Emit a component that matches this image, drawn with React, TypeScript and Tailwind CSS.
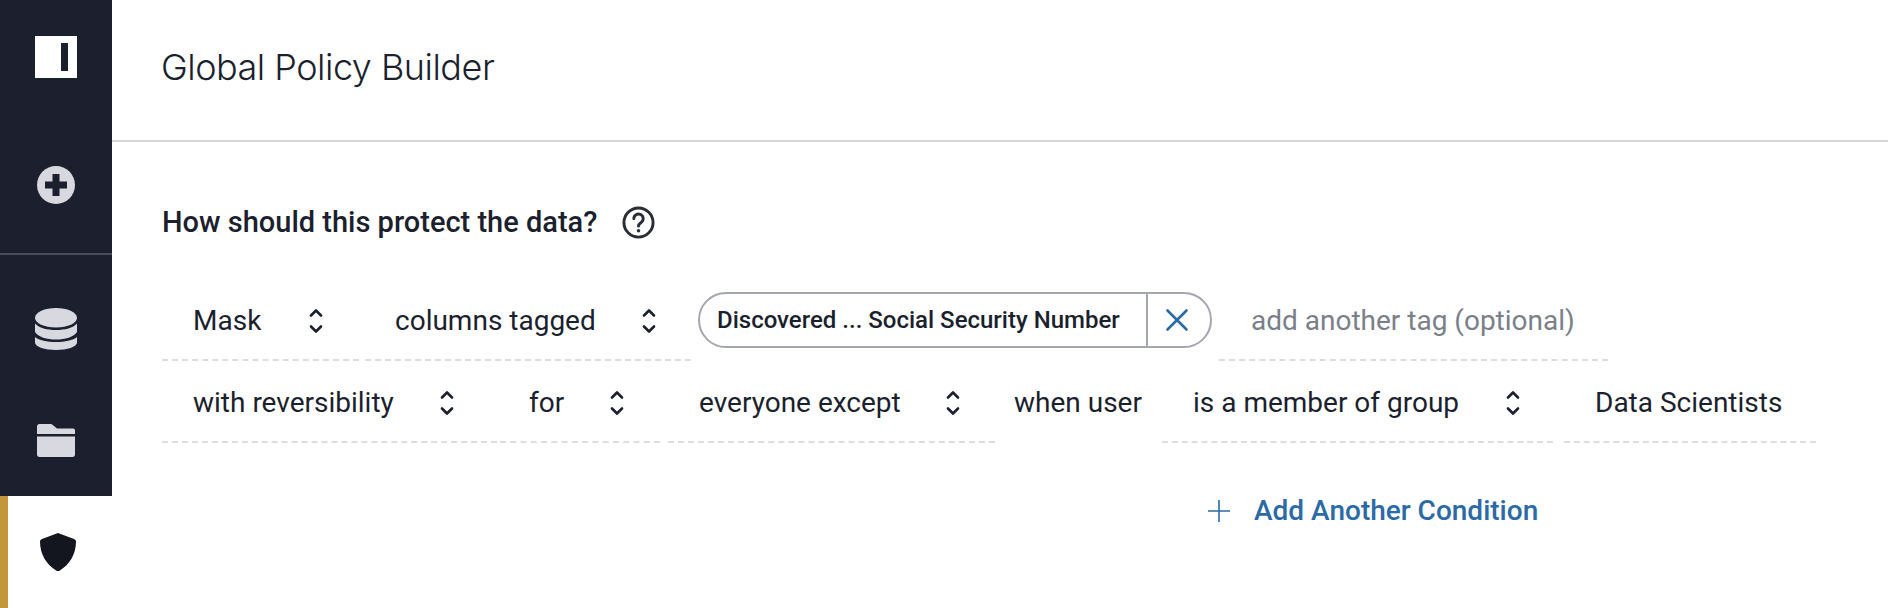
import * as React from "react"

function UpDown() {
  return (
    <svg viewBox="0 0 14 28" className="w-[14px] h-[28px] shrink-0" fill="none" stroke="#1b1f2e" strokeWidth="2.6" strokeLinecap="round" strokeLinejoin="round">
      <path d="M2 8.500 7 3.500l5 5" />
      <path d="M2 19.500 7 24.500l5-5" />
    </svg>
  )
}

interface FieldProps {
  label: string
  width: string
  gap?: string
  pad?: string
  chevron?: boolean
  muted?: boolean
}

function Field({ label, width, gap, pad = "pl-[31px]", chevron = true, muted }: FieldProps) {
  return (
    <div className={`flex items-center h-[78px] border-b-2 border-dashed border-[#dcdde0] shrink-0 ${pad} ${width}`}>
      <span className={`whitespace-nowrap ${muted ? "text-[#7b7f8a]" : "text-[#1b1f2e]"}`}>{label}</span>
      {chevron && <span className={gap}><UpDown /></span>}
    </div>
  )
}

export default function App() {
  return (
    <div className="flex h-[608px] w-[1888px] overflow-hidden bg-white font-['Roboto',sans-serif] text-[#1b1f2e]">
      <aside className="flex flex-col w-[112px] shrink-0 bg-[#1b1f2e]">
        <div className="flex flex-col items-center border-b-2 border-[#4a4d5a] h-[255px]">
          <div className="flex items-center justify-center w-[42px] h-[42px] mt-[36px] bg-white pl-[17px]">
            <div className="w-[7px] h-[28px] bg-[#1b1f2e]" />
          </div>
          <svg viewBox="0 0 38 38" className="w-[38px] h-[38px] mt-[88px]">
            <circle cx="19" cy="19" r="19" fill="#d8d9e0" />
            <path d="M15.500 8h7v7.500H30v7h-7.500V30h-7v-7.500H8v-7h7.500z" fill="#1b1f2e" />
          </svg>
        </div>
        <div className="flex flex-col items-center flex-1">
          <svg viewBox="0 0 42 42" className="w-[42px] h-[42px] mt-[53px]" fill="#d8d9e0">
            <path d="M0 10C0 4 10 0 21 0s21 4 21 10c0 5-9 9.500-21 9.500S0 15 0 10z" />
            <path d="M0 15.500C4 20 12 22 21 22s17-2 21-6.500V24c-3 5-12 7.500-21 7.500S3 29 0 24z" />
            <path d="M0 29c4 3.500 12 5 21 5s17-1.500 21-5v5.500C42 39 32 42 21 42S0 39 0 34.500z" />
          </svg>
          <svg viewBox="0 0 38 33" className="w-[38px] h-[33px] mt-[74px]" fill="#d8d9e0">
            <path d="M0 10V2.500C0 1 1 0 2.500 0h11c1 0 1.700.4 2.300 1L20 4.500h16c1.200 0 2 .8 2 2V10z" />
            <path d="M0 12.500h38V30.500c0 1.500-1 2.500-2.500 2.500h-33C1 33 0 32 0 30.500z" />
          </svg>
        </div>
        <div className="flex items-center justify-center h-[112px] pr-[5px] bg-white border-l-[8px] border-[#c4963c]">
          <svg viewBox="0 0 36 38" className="w-[36px] h-[38px]" fill="#14161f">
            <path d="M18 0 34 6c1.200.5 2 1.400 2 2.600C36 22 29 32 20 37.400c-1.300.8-2.700.8-4 0C7 32 0 22 0 8.600 0 7.400.8 6.500 2 6z" />
          </svg>
        </div>
      </aside>
      <main className="flex flex-col flex-1 min-w-0">
        <header className="flex items-center h-[142px] pl-[49px] pb-[6px] border-b-2 border-[#d4d5d8]">
          <h1 className="font-['Inter',sans-serif] font-light text-[36px] tracking-[-0.5px] text-[#1b1f2e]">Global Policy Builder</h1>
        </header>
        <section className="pl-[50px] pt-[62px]">
          <div className="flex items-center h-[38px]">
            <h2 className="font-medium text-[29px] text-[#1b1f2e]">How should this protect the data?</h2>
            <svg viewBox="0 0 24 24" className="w-[35px] h-[35px] ml-[24px] mb-[2px]" fill="none" stroke="#2a2d38" strokeWidth="2" strokeLinecap="round">
              <circle cx="12" cy="12" r="10" />
              <path d="M8.800 9.400a3.200 3.200 0 1 1 5 2.600c-1.100.8-1.800 1.300-1.800 2.500" />
              <path d="M12 17.600h.01" strokeWidth="2.400" />
            </svg>
          </div>
          <div className="flex items-end text-[28px] mt-[41px] h-[78px]">
            <Field label="Mask" width="w-[197px]" gap="ml-[48px]" />
            <Field label="columns tagged" width="w-[326px] ml-[6px]" pad="pl-[30px]" gap="ml-[46px]" />
            <div className="flex items-stretch h-[56px] w-[514px] ml-[7px] mb-[13px] shrink-0 rounded-full border-2 border-[#a5a7b0]">
              <span className="flex items-center flex-1 pl-[17px] text-[24px] font-medium whitespace-nowrap">Discovered ... Social Security Number</span>
              <span className="flex items-center justify-center w-[64px] pr-[4px] border-l-2 border-[#a5a7b0]">
                <svg viewBox="0 0 24 24" className="w-[24px] h-[24px]" fill="none" stroke="#2c6aa6" strokeWidth="2.600" strokeLinecap="round">
                  <path d="M2.500 2.500l19 19M21.500 2.500l-19 19" />
                </svg>
              </span>
            </div>
            <Field label="add another tag (optional)" width="w-[389px] ml-[7px]" pad="pl-[32px]" chevron={false} muted />
          </div>
          <div className="flex items-end text-[28px] mt-[4px] h-[78px]">
            <Field label="with reversibility" width="w-[335px]" gap="ml-[46px]" />
            <Field label="for" width="w-[160px] ml-[3px]" pad="pl-[29px]" gap="ml-[46px]" />
            <Field label="everyone except" width="w-[327px] ml-[8px]" pad="pl-[31px]" gap="ml-[45px]" />
            <span className="flex items-center h-[78px] pl-[19px] pb-[2px] w-[167px] shrink-0 whitespace-nowrap">when user</span>
            <Field label="is a member of group" width="w-[391px]" gap="ml-[47px]" />
            <Field label="Data Scientists" width="w-[252px] ml-[11px]" chevron={false} />
          </div>
          <div className="flex items-center h-[40px] mt-[48px] ml-[1045px] text-[#2c6aa6]">
            <svg viewBox="0 0 24 24" className="w-[24px] h-[24px]" fill="none" stroke="#2c6aa6" strokeWidth="1.600">
              <path d="M12 1v22M1 12h22" />
            </svg>
            <span className="ml-[23px] text-[28px] font-medium whitespace-nowrap">Add Another Condition</span>
          </div>
        </section>
      </main>
    </div>
  )
}
